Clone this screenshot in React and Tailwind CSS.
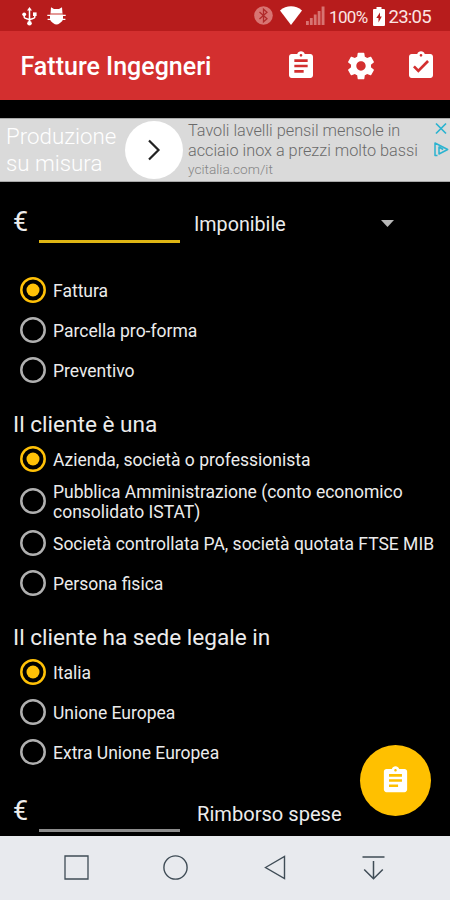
import { MdAssignment, MdAssignmentTurnedIn } from "react-icons/md";

function StatusBar() {
  return (
    <div className="flex h-[31px] items-center bg-[#b71c1c] text-white">
      <svg className="ml-[22px] mt-px h-[19px] w-[15px]" viewBox="0 0 15 19" fill="none" stroke="currentColor" strokeWidth="1.5">
        <path d="M7.5 3v13M2.2 8v2.2c0 2 5.3 1 5.3 3.4M12.8 8v2.2c0 2-5.3 1-5.3 3.4" />
        <path d="M7.5 0 10 3.6H5z" fill="currentColor" stroke="none" />
        <circle cx="7.5" cy="16.3" r="2.3" fill="currentColor" stroke="none" />
        <circle cx="2.2" cy="7.3" r="1.9" fill="currentColor" stroke="none" />
        <path d="M11 5.4h3.6V9H11z" fill="currentColor" stroke="none" />
      </svg>
      <svg className="ml-[10px] h-[18px] w-[19px]" viewBox="0 0 19 18" fill="currentColor">
        <path d="M3.5 6.500 4 .3 7 2h5l3-1.700.5 6.200z" />
        <path d="M3 7.700h13v4q0 2.800-3 4.300Q11 17.600 9.500 17.600T6 16q-3-1.500-3-4.300z" />
        <path d="M.3 8.400h18.400M.6 12.300h17.800" stroke="currentColor" strokeWidth="1.300" />
        <path d="M3.500 7.100h12" stroke="#eba5a1" strokeWidth="1.200" />
      </svg>
      <svg className="ml-[188px] h-[19px] w-[19px]" viewBox="0 0 19 19">
        <circle cx="9.500" cy="9.500" r="9.300" fill="#d87472" />
        <path d="M5.500 6l7.500 6.800-3.500 3V3.200l3.500 3L5.500 13" fill="none" stroke="#b02a2a" strokeWidth="1.300" />
      </svg>
      <svg className="ml-[7px] h-[19px] w-[22px]" viewBox="0 0 22 19" fill="currentColor">
        <path d="M11 19 0 4.500Q5 .3 11 .3t11 4.200z" />
      </svg>
      <svg className="ml-[4px] h-[19px] w-[19px]" viewBox="0 0 19 19" fill="#d87472">
        <path d="M0 15h2.800v4H0zM3.900 12h2.800v7H3.900zM7.800 8.500h2.800V19H7.800zM11.700 5h2.800v14h-2.800zM15.600.5h2.900V19h-2.900z" />
      </svg>
      <span className="ml-[4px] mt-[2px] w-[39px] whitespace-nowrap text-[17px] leading-5 tracking-[-0.65px] text-[#fbe4e3]">100%</span>
      <svg className="ml-[5px] mt-px h-[19px] w-[12px]" viewBox="0 0 12 19">
        <path d="M3.500 0h5v2H11q1 0 1 1v15q0 1-1 1H1q-1 0-1-1V3q0-1 1-1h2.500z" fill="#fff" />
        <path d="M7 5.500 3.300 11h2.200v4.500L8.800 9.500H7z" fill="#b71c1c" />
      </svg>
      <span className="ml-[3.500px] mt-[2px] whitespace-nowrap text-[18.5px] leading-5 tracking-[-0.75px] text-[#fbe4e3]">23:05</span>
    </div>
  );
}

function GearIcon() {
  return (
    <svg className="size-8" viewBox="0 0 24 24" fill="currentColor">
      <path d="M19.430 12.980c.04-.32.07-.64.07-.98s-.03-.66-.07-.98l2.110-1.650c.19-.15.24-.42.12-.64l-2-3.460c-.12-.22-.39-.3-.61-.22l-2.490 1c-.52-.4-1.080-.73-1.690-.98l-.38-2.650C14.460 2.180 14.250 2 14 2h-4c-.25 0-.46.18-.49.42l-.38 2.650c-.61.25-1.170.59-1.690.98l-2.490-1c-.23-.09-.49 0-.61.22l-2 3.460c-.13.22-.07.49.12.64l2.110 1.650c-.04.32-.07.65-.07.98s.03.66.07.98l-2.110 1.650c-.19.15-.24.42-.12.64l2 3.460c.12.22.39.3.61.22l2.490-1c.52.4 1.080.73 1.690.98l.38 2.650c.03.24.24.42.49.42h4c.25 0 .46-.18.49-.42l.38-2.650c.61-.25 1.170-.59 1.690-.98l2.490 1c.23.09.49 0 .61-.22l2-3.460c.12-.22.07-.49-.12-.64l-2.110-1.650zM12 15.500c-1.930 0-3.500-1.570-3.500-3.500s1.570-3.500 3.500-3.500 3.500 1.570 3.500 3.500-1.570 3.500-3.500 3.500z" />
    </svg>
  );
}

function Toolbar() {
  return (
    <header className="flex h-[69px] items-center justify-between bg-[#d32f2f] pl-[20.500px] pr-[13.500px] text-white">
      <h1 className="pt-[3px] text-[25px] font-medium leading-8">Fatture Ingegneri</h1>
      <div className="flex gap-7">
        <MdAssignment size={32} />
        <GearIcon />
        <MdAssignmentTurnedIn size={32} />
      </div>
    </header>
  );
}

function AdBanner() {
  return (
    <div className="mt-[18px] flex h-[64px] border-y border-[#a8a8a8] bg-[#dadada] font-light">
      <div className="w-[125px] pl-[6px] pt-[4px] text-[22.3px] leading-[27px] text-white">
        <p>Produzione</p>
        <p>su misura</p>
      </div>
      <div className="mt-[2px] flex size-[58px] shrink-0 items-center justify-center rounded-full bg-white">
        <svg className="h-[22px] w-[14px]" viewBox="0 0 14 22" fill="none" stroke="#222" strokeWidth="2.200">
          <path d="M2 1.500 11.500 11 2 20.500" />
        </svg>
      </div>
      <div className="ml-[5px] w-[240px] whitespace-nowrap pt-[2px] text-[16.25px] leading-[19.500px] text-[#6a6a6a]">
        <p>Tavoli lavelli pensil mensole in</p>
        <p>acciaio inox a prezzi molto bassi</p>
        <p className="text-[13.7px] text-[#858585]">ycitalia.com/it</p>
      </div>
      <div className="ml-[6px] mt-[3px] flex flex-col gap-[6px]">
        <svg className="size-[14px]" viewBox="0 0 14 14" fill="none" stroke="#2bb3d0" strokeWidth="1.700">
          <path d="M2 1.500 12 11.500M12 1.500 2 11.500" />
        </svg>
        <svg className="h-[15px] w-[15px]" viewBox="0 0 15 15" fill="none" stroke="#2bb3d0" strokeWidth="1.500">
          <path d="M3.500 13.500H1V1l12.700 6.500L5 12V5l4.200 2.500" strokeLinejoin="round" />
        </svg>
      </div>
    </div>
  );
}

function Radio({ checked, tall, children }) {
  return (
    <label className={`flex items-center pl-5 ${tall ? "h-[44.500px]" : "h-10"}`}>
      <svg className="size-[26px] shrink-0" viewBox="0 0 26 26" fill="none">
        <circle cx="13" cy="13" r="11.700" stroke={checked ? "#ffc107" : "#b0b0b0"} strokeWidth="2.500" />
        {checked && <circle cx="13" cy="13" r="6.500" fill="#ffc107" />}
      </svg>
      <span className="ml-[7px] whitespace-nowrap pt-[2px] text-[17.500px] leading-5 text-[#ececec]">{children}</span>
    </label>
  );
}

function Heading({ children }) {
  return <h2 className="pl-[13px] text-[22.600px] leading-7 text-[#ececec]">{children}</h2>;
}

function AmountField({ active, children }) {
  return (
    <div className="flex h-[36px] items-start pl-[13px] text-[#ececec]">
      <span className="w-[26px] text-[27px] leading-[30px]">€</span>
      <div className={`h-full w-[141px] border-b-[3px] ${active ? "border-[#dfb614]" : "border-[#8c8c8c]"}`} />
      {children}
    </div>
  );
}

function NavBar() {
  return (
    <nav className="flex h-[64.500px] items-center bg-[#e8eaee] pl-[64px] text-[#3f4c56]">
      <svg className="size-[25px]" viewBox="0 0 25 25" fill="none" stroke="currentColor" strokeWidth="1.300">
        <path d="M1 1h23v23H1z" />
      </svg>
      <svg className="ml-[74px] size-[25px]" viewBox="0 0 25 25" fill="none" stroke="currentColor" strokeWidth="1.400">
        <circle cx="12.500" cy="12.500" r="11.600" />
      </svg>
      <svg className="ml-[75px] h-[25px] w-[23px]" viewBox="0 0 23 25" fill="none" stroke="currentColor" strokeWidth="1.400">
        <path d="M2.500 12.500 21.500 1.500v22z" />
      </svg>
      <svg className="ml-[76px] h-[25px] w-[23px]" viewBox="0 0 23 25" fill="none" stroke="currentColor" strokeWidth="1.500">
        <path d="M.5 2h22M11.500 6v18M2.200 14.500l9.300 9.300 9.300-9.300" />
      </svg>
    </nav>
  );
}

export default function App() {
  return (
    <div className="relative flex h-[900px] w-[450px] flex-col overflow-hidden bg-black font-['Roboto',sans-serif]">
      <StatusBar />
      <Toolbar />
      <AdBanner />
      <main className="min-h-0 flex-1 overflow-hidden pt-[25px]">
        <AmountField active>
          <span className="ml-[14px] pt-px text-[19.7px] leading-[34px]">Imponibile</span>
          <svg className="ml-[95px] mt-[13px] h-[7px] w-[13px]" viewBox="0 0 13 7" fill="#b8b8b8">
            <path d="M0 0h13L6.500 7z" />
          </svg>
        </AmountField>
        <div className="pt-[26.500px]">
          <Radio checked>Fattura</Radio>
          <Radio>Parcella pro-forma</Radio>
          <Radio>Preventivo</Radio>
        </div>
        <div className="pt-[21px]">
          <Heading>Il cliente è una</Heading>
          <Radio checked>Azienda, società o professionista</Radio>
          <Radio tall>
            Pubblica Amministrazione (conto economico
            <br />
            consolidato ISTAT)
          </Radio>
          <Radio>Società controllata PA, società quotata FTSE MIB</Radio>
          <Radio>Persona fisica</Radio>
        </div>
        <div className="pt-[21px]">
          <Heading>Il cliente ha sede legale in</Heading>
          <Radio checked>Italia</Radio>
          <Radio>Unione Europea</Radio>
          <Radio>Extra Unione Europea</Radio>
        </div>
        <div className="pt-[24px]">
          <AmountField>
            <span className="ml-[17px] pt-px text-[20.1px] leading-[34px]">Rimborso spese</span>
          </AmountField>
        </div>
      </main>
      <NavBar />
      <button className="absolute left-[360px] top-[745px] flex size-[71px] items-center justify-center rounded-full bg-[#ffc000] text-white">
        <MdAssignment size={31} />
      </button>
    </div>
  );
}
